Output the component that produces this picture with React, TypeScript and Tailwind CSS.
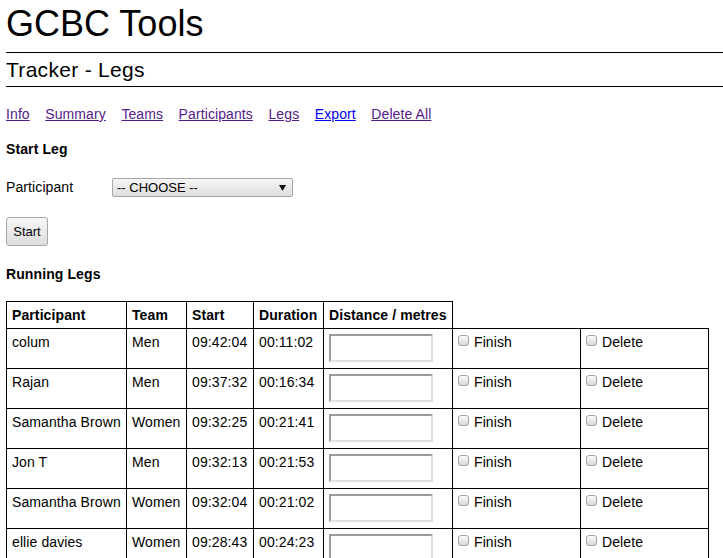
import React from 'react';

const rows = [
  { name: 'colum', team: 'Men', start: '09:42:04', duration: '00:11:02' },
  { name: 'Rajan', team: 'Men', start: '09:37:32', duration: '00:16:34' },
  { name: 'Samantha Brown', team: 'Women', start: '09:32:25', duration: '00:21:41' },
  { name: 'Jon T', team: 'Men', start: '09:32:13', duration: '00:21:53' },
  { name: 'Samantha Brown', team: 'Women', start: '09:32:04', duration: '00:21:02' },
  { name: 'ellie davies', team: 'Women', start: '09:28:43', duration: '00:24:23' },
];

const links = [
  { label: 'Info', visited: true },
  { label: 'Summary', visited: true },
  { label: 'Teams', visited: true },
  { label: 'Participants', visited: true },
  { label: 'Legs', visited: true },
  { label: 'Export', visited: false },
  { label: 'Delete All', visited: true },
];

const Check = ({ label }: { label: string }) => (
  <label className="flex items-start gap-[5px]">
    <input
      type="checkbox"
      className="appearance-none mt-[1px] w-[11px] h-[11px] rounded-[3px] border border-[#a3a3a3] bg-gradient-to-b from-[#fdfdfd] to-[#d8d8d8] shrink-0"
    />
    <span>{label}</span>
  </label>
);

const cell = "border border-black px-[5px] pt-[5px] pb-[5px] align-top leading-[16px]";

const App = () => {
  return (
    <div className="min-h-screen bg-white text-black pl-[6px] text-[14px] tracking-[0.1px]" style={{ fontFamily: '"Liberation Sans", Arial, sans-serif' }}>
      <h1 className="mt-[3px] text-[36px] leading-[41px] font-normal tracking-normal">GCBC Tools</h1>
      <hr className="mt-[8px] border-0 border-t border-black" />
      <h2 className="mt-[5px] text-[21px] leading-[24px] font-normal tracking-[0.3px]">Tracker - Legs</h2>
      <hr className="mt-[4px] border-0 border-t border-black" />

      <nav className="mt-[19px] flex gap-[15.5px] leading-[16px]">
        {links.map(l => (
          <a
            key={l.label}
            href="#"
            className={`underline ${l.visited ? 'text-[#551a8b]' : 'text-[#0000ee]'}`}
          >
            {l.label}
          </a>
        ))}
      </nav>

      <h3 className="mt-[19px] font-bold leading-[16px]">Start Leg</h3>

      <div className="mt-[20px] flex items-start leading-[16px]">
        <span className="w-[106px] mt-[2px]">Participant</span>
        <div className="mt-[1px] w-[181px] h-[19px] flex items-center justify-between pl-[4px] pr-[6px] text-[13px] tracking-normal border border-[#a6a6a6] rounded-[2px] bg-gradient-to-b from-[#f7f7f7] to-[#dcdcdc]">
          <span>-- CHOOSE --</span>
          <svg width="7" height="6" viewBox="0 0 7 6">
            <polygon points="0,0 7,0 3.5,6" fill="#111" />
          </svg>
        </div>
      </div>

      <button className="mt-[20px] h-[29px] w-[42px] text-[13px] tracking-normal pt-[1px] border border-[#a6a6a6] rounded-[3px] bg-gradient-to-b from-[#f7f7f7] to-[#dcdcdc]">
        Start
      </button>

      <h3 className="mt-[20px] font-bold leading-[16px]">Running Legs</h3>

      <table className="mt-[19px] border-collapse table-fixed w-[702px]">
        <colgroup>
          <col className="w-[120px]" />
          <col className="w-[60px]" />
          <col className="w-[67px]" />
          <col className="w-[70px]" />
          <col className="w-[129px]" />
          <col className="w-[128px]" />
          <col className="w-[128px]" />
        </colgroup>
        <thead>
          <tr>
            <th className={`${cell} text-left font-bold`}>Participant</th>
            <th className={`${cell} text-left font-bold`}>Team</th>
            <th className={`${cell} text-left font-bold`}>Start</th>
            <th className={`${cell} text-left font-bold`}>Duration</th>
            <th className={`${cell} text-left font-bold whitespace-nowrap`}>Distance / metres</th>
          </tr>
        </thead>
        <tbody>
          {rows.map((r, i) => (
            <tr key={i}>
              <td className={`${cell} whitespace-nowrap`}>{r.name}</td>
              <td className={cell}>{r.team}</td>
              <td className={cell}>{r.start}</td>
              <td className={cell}>{r.duration}</td>
              <td className={cell}>
                <input
                  type="text"
                  className="block w-[104px] h-[28px] mb-[1px] border-2 border-t-[#9b9b9b] border-l-[#9b9b9b] border-r-[#e0e0e0] border-b-[#e0e0e0] bg-white outline-none"
                />
              </td>
              <td className={cell}><Check label="Finish" /></td>
              <td className={cell}><Check label="Delete" /></td>
            </tr>
          ))}
        </tbody>
      </table>
    </div>
  );
};

export default App;
